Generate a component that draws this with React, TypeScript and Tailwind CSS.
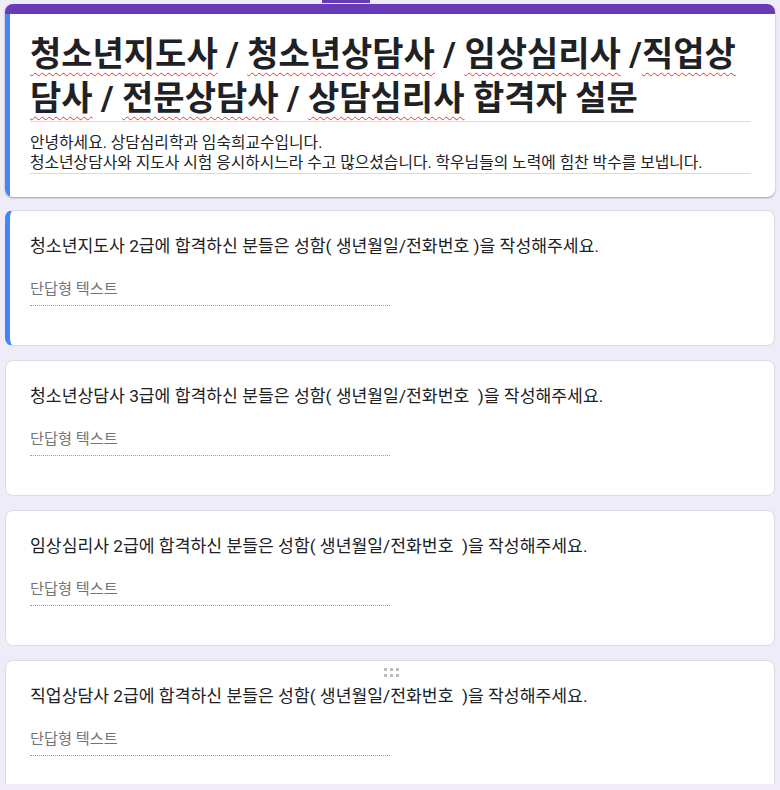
import type { ReactElement } from 'react'

const questions = [
  '청소년지도사 2급에 합격하신 분들은 성함( 생년월일/전화번호 )을 작성해주세요.',
  '청소년상담사 3급에 합격하신 분들은 성함( 생년월일/전화번호  )을 작성해주세요.',
  '임상심리사 2급에 합격하신 분들은 성함( 생년월일/전화번호  )을 작성해주세요.',
  '직업상담사 2급에 합격하신 분들은 성함( 생년월일/전화번호  )을 작성해주세요.',
]

// red spellcheck squiggle under words
const Spell = ({ children }: { children: string }) => (
  <span className="underline decoration-wavy decoration-[#e53935] decoration-1 underline-offset-[6px]">
    {children}
  </span>
)

const DragHandle = () => (
  <div className="absolute top-[7px] left-[378px] grid grid-cols-3 gap-x-[3px] gap-y-[3px]">
    {[0, 1, 2, 3, 4, 5].map((i) => (
      <span key={i} className="w-[3px] h-[3px] bg-[#bdbdbd]" />
    ))}
  </div>
)

const QuestionCard = ({ text, focused, handle }: { text: string; focused?: boolean; handle?: boolean }) => (
  <div
    className={
      focused
        ? 'relative h-[136px] bg-white rounded-lg border border-[#dadce0] border-l-[5px] border-l-[#4285f4] pl-[20px] pt-[23px]'
        : 'relative h-[136px] bg-white rounded-lg border border-[#dadce0] pl-[24px] pt-[23px]'
    }
  >
    {handle && <DragHandle />}
    <div className="text-[17.2px] leading-[24px] text-[#202124] whitespace-pre-wrap">{text}</div>
    <div className="mt-[21px] w-[360px] pb-[6px] border-b border-dotted border-[#9e9e9e] text-[15.2px] leading-[20px] text-[#70757a]">
      단답형 텍스트
    </div>
  </div>
)

const App = (): ReactElement => {
  return (
    <div
      className="w-[780px] h-[790px] overflow-hidden bg-[#f0ebf8]"
      style={{ fontFamily: 'Roboto, "Noto Sans CJK KR", sans-serif' }}
    >
      <div className="h-[784px] overflow-hidden px-[5px]">
        {/* top tab */}
        <div className="h-[4px]">
          <div className="ml-[317px] w-[48px] h-[3px] bg-[#673ab7]" />
        </div>

        {/* header card */}
        <div className="bg-white rounded-lg shadow-[0_1px_2px_rgba(0,0,0,0.35)] overflow-hidden">
          <div className="h-[10px] bg-[#673ab7]" />
          <div className="border-l-[5px] border-[#4285f4] pl-[20px] pr-[24px] pt-[18px] pb-[23px]">
            <div className="border-b border-[#dadce0] pb-[1px]">
              <h1 className="text-[34px] leading-[44px] font-bold text-[#202124] whitespace-nowrap">
                <Spell>청소년지도사</Spell> / <Spell>청소년상담사</Spell> / <Spell>임상심리사</Spell> /<Spell>직업상</Spell>
                <br />
                <Spell>담사</Spell> / <Spell>전문상담사</Spell> / <Spell>상담심리사</Spell> 합격자 설문
              </h1>
            </div>
            <div className="mt-[11px] border-b border-[#dadce0] text-[15.8px] leading-[20px] text-[#202124]">
              <p>안녕하세요. 상담심리학과 임숙희교수입니다.</p>
              <p>청소년상담사와 지도사 시험 응시하시느라 수고 많으셨습니다. 학우님들의 노력에 힘찬 박수를 보냅니다.</p>
            </div>
          </div>
        </div>

        {/* questions */}
        <div className="mt-[13px] flex flex-col gap-[14px]">
          {questions.map((q, i) => (
            <QuestionCard key={i} text={q} focused={i === 0} handle={i === 3} />
          ))}
        </div>
      </div>
    </div>
  )
}

export default App
